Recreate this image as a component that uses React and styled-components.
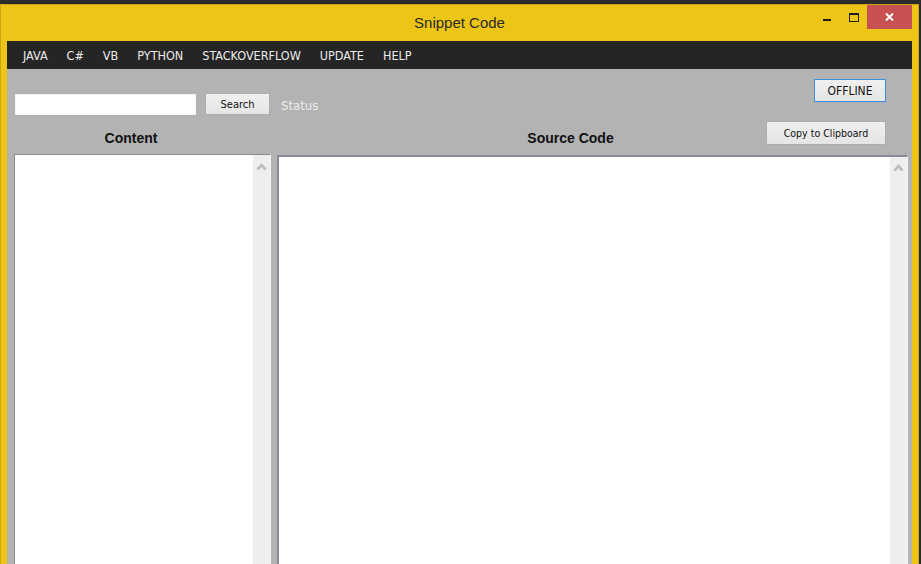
import React from 'react';
import styled, { createGlobalStyle } from 'styled-components';

/* Global */
const GlobalStyle = createGlobalStyle`
    html, body {
        margin: 0;
        padding: 0;
        background: #2b2b2b;
        overflow: hidden;
    }
    * {
        box-sizing: border-box;
    }
`;

const NARROW = `"DejaVu Sans Condensed", "Liberation Sans", sans-serif`;

/* Frame */
const Desktop = styled.div`
    width: 921px;
    height: 564px;
    padding: 4px 2px 0 0;
    overflow: hidden;
    background: #2b2b2b;
`;

const Window = styled.div`
    display: flex;
    flex-direction: column;
    width: 919px;
    height: 640px;
    background: #ecc517;
    border: 1px solid #c9a612;
    font-family: "Liberation Sans", Arial, sans-serif;
`;

const TitleBar = styled.div`
    display: grid;
    grid-template-columns: 1fr auto 1fr;
    height: 36px;
`;

const Title = styled.div`
    grid-column: 2;
    align-self: center;
    margin-top: -1px;
    font-size: 15px;
    color: #2a2a2a;
`;

const Controls = styled.div`
    grid-column: 3;
    justify-self: end;
    display: flex;
    height: 24px;
    margin-right: 6px;
`;

const ControlButton = styled.div`
    display: flex;
    align-items: center;
    justify-content: center;
    width: ${p => (p.$close ? '45px' : '27px')};
    height: 24px;
    background: ${p => (p.$close ? '#c75050' : 'transparent')};
`;

/* Client area */
const Client = styled.div`
    display: flex;
    flex-direction: column;
    flex: 1;
    margin: 0 6px 0 6px;
    background: #b3b3b3;
`;

const MenuBar = styled.div`
    display: flex;
    align-items: center;
    gap: 19px;
    height: 28px;
    padding-left: 16px;
    background: #252525;
`;

const MenuItem = styled.span`
    font-family: ${NARROW};
    font-size: 12.5px;
    color: #ececec;
`;

const Main = styled.div`
    display: flex;
    flex-direction: column;
    flex: 1;
    padding: 0 3px 0 7px;
`;

const TopArea = styled.div`
    display: grid;
    grid-template-columns: 257px 1fr 120px;
    grid-template-rows: 10px 14px 22px 6px 24px 9px;
    grid-template-areas:
        ". . ."
        ". . offline"
        "search status offline"
        ". . ."
        "content source copy"
        ". . .";
    column-gap: 6px;
    padding-right: 23px;
`;

const SearchRow = styled.div`
    grid-area: search;
    display: flex;
    align-items: flex-end;
    gap: 9px;
    padding-left: 1px;
`;

const SearchInput = styled.input`
    width: 181px;
    height: 21px;
    border: 1px solid #f4f4f4;
    background: #fff;
    outline: none;
    margin: 0;
`;

const Button = styled.button`
    grid-area: ${p => p.$area || 'auto'};
    justify-self: ${p => p.$justify || 'stretch'};
    align-self: start;
    width: ${p => p.$width};
    height: ${p => p.$height};
    margin: 0;
    padding: 0;
    border: 1px solid ${p => (p.$focused ? '#3c8fe6' : '#adadad')};
    background: linear-gradient(#f0f0f0, #e5e5e5);
    font-family: ${NARROW};
    font-size: ${p => p.$size || '11px'};
    color: #111;
`;

const Status = styled.span`
    grid-area: status;
    align-self: center;
    margin: 3px 0 0 4px;
    font-family: ${NARROW};
    font-size: 13px;
    color: #ececec;
`;

const Label = styled.div`
    grid-area: ${p => p.$area};
    align-self: end;
    padding-left: ${p => p.$padLeft || '0'};
    padding-right: ${p => p.$padRight || '0'};
    text-align: center;
    font-size: 14px;
    font-weight: bold;
    line-height: 16px;
    color: #111;
    margin-bottom: -1px;
`;

const Panels = styled.div`
    display: grid;
    grid-template-columns: 257px 1fr;
    column-gap: 6px;
    flex: 1;
    padding-right: 1px;
`;

const Panel = styled.div`
    display: flex;
    justify-content: flex-end;
    margin-top: ${p => (p.$sunken ? '1px' : '0')};
    background: #fff;
    border-style: solid;
    border-width: ${p => (p.$sunken ? '2px 1px 1px 2px' : '1px')};
    border-color: ${p => (p.$sunken ? '#8b8b97 #f2f2f2 #f2f2f2 #8b8b97' : '#878b93 #f2f2f2 #f2f2f2 #878b93')};
`;

const ScrollTrack = styled.div`
    display: flex;
    justify-content: center;
    width: 17px;
    padding-top: ${p => (p.$sunken ? '7px' : '8px')};
    background: #eeeeee;
`;

const UpArrow = () => (
    <svg width="9" height="7" viewBox="0 0 9 7">
        <polygon points="0,5 4,0.5 5,0.5 9,5 9,7 7,7 4.5,4 2,7 0,7" fill="#bdbdbd" />
    </svg>
);

const MENU = ['JAVA', 'C#', 'VB', 'PYTHON', 'STACKOVERFLOW', 'UPDATE', 'HELP'];

const App = () => {
    return (
        <>
            <GlobalStyle />
            <Desktop>
                <Window>
                    <TitleBar>
                        <Title>Snippet Code</Title>
                        <Controls>
                            <ControlButton>
                                <svg width="8" height="9" viewBox="0 0 8 9">
                                    <rect x="0" y="6" width="8" height="2" fill="#1e1e1e" />
                                </svg>
                            </ControlButton>
                            <ControlButton>
                                <svg width="10" height="9" viewBox="0 0 10 9">
                                    <rect x="0.5" y="1" width="9" height="7.5" fill="none" stroke="#1e1e1e" strokeWidth="1" />
                                    <rect x="0" y="0" width="10" height="2" fill="#1e1e1e" />
                                </svg>
                            </ControlButton>
                            <ControlButton $close>
                                <svg width="9" height="8" viewBox="0 0 9 8">
                                    <path d="M1 0.5 L8 7.5 M8 0.5 L1 7.5" stroke="#fff" strokeWidth="2" />
                                </svg>
                            </ControlButton>
                        </Controls>
                    </TitleBar>
                    <Client>
                        <MenuBar>
                            {MENU.map(item => (
                                <MenuItem key={item}>{item}</MenuItem>
                            ))}
                        </MenuBar>
                        <Main>
                            <TopArea>
                                <SearchRow>
                                    <SearchInput />
                                    <Button $width="65px" $height="22px">Search</Button>
                                </SearchRow>
                                <Status>Status</Status>
                                <Button $area="offline" $justify="end" $width="72px" $height="23px" $size="12px" $focused>
                                    OFFLINE
                                </Button>
                                <Label $area="content" $padRight="23px">Content</Label>
                                <Label $area="source" $padLeft="104px">Source Code</Label>
                                <Button $area="copy" $width="120px" $height="24px" $size="10.5px">Copy to Clipboard</Button>
                            </TopArea>
                            <Panels>
                                <Panel>
                                    <ScrollTrack>
                                        <UpArrow />
                                    </ScrollTrack>
                                </Panel>
                                <Panel $sunken>
                                    <ScrollTrack $sunken>
                                        <UpArrow />
                                    </ScrollTrack>
                                </Panel>
                            </Panels>
                        </Main>
                    </Client>
                </Window>
            </Desktop>
        </>
    );
};

export default App;
